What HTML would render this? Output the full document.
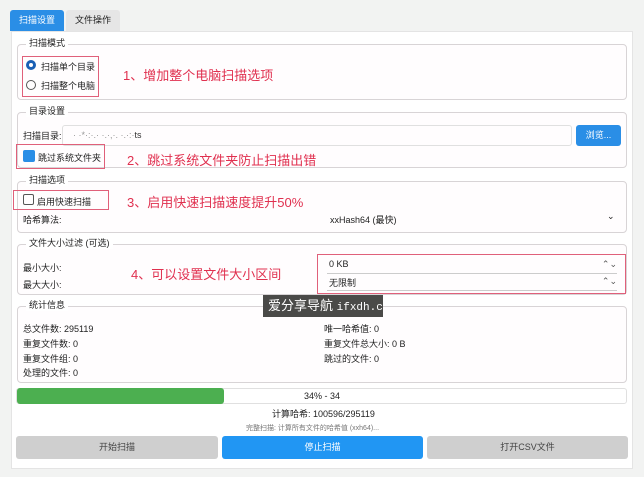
<!DOCTYPE html>
<html><head><meta charset="utf-8"><style>
*{box-sizing:border-box;margin:0;padding:0}
body{width:644px;height:477px;background:#f2f3f2;font-family:"Liberation Sans","Noto Sans CJK SC",sans-serif;font-size:9px;color:#222;position:relative;overflow:hidden}
.a{position:absolute}
.fs{position:absolute;left:17px;width:610px;border:1px solid #d8d4d6;border-radius:4px;background:#fffdfe}
.lg{position:absolute;top:-9px;left:8px;background:#fff;padding:0 3px;font-size:9px;color:#222}
.red{position:absolute;border:1px solid #e0607a}
.ann{position:absolute;color:#e0304f;font-size:13px}
.btn{position:absolute;top:436px;height:23px;border-radius:3px;text-align:center;line-height:23px;font-size:9px}
</style></head><body>
<div class="a" style="left:10px;top:10px;width:54px;height:21px;background:#2a8ee6;color:#fff;line-height:20px;text-align:center;border-radius:3px 3px 0 0">扫描设置</div>
<div class="a" style="left:66px;top:10px;width:54px;height:21px;background:#e6e6e6;line-height:20px;text-align:center;border-radius:3px 3px 0 0">文件操作</div>
<div class="a" style="left:11px;top:31px;width:622px;height:438px;background:#fff;border:1px solid #e4e4e4"></div>

<div class="fs" style="top:44px;height:56px"><span class="lg">扫描模式</span></div>
<div class="a" style="left:26px;top:60px;width:10px;height:10px;border:3px solid #1a5fb4;border-radius:50%"></div>
<div class="a" style="left:41px;top:60px">扫描单个目录</div>
<div class="a" style="left:26px;top:80px;width:10px;height:10px;border:1px solid #555;border-radius:50%"></div>
<div class="a" style="left:41px;top:79px">扫描整个电脑</div>
<div class="red" style="left:22px;top:56px;width:77px;height:41px"></div>
<div class="ann" style="left:123px;top:65px">1、增加整个电脑扫描选项</div>

<div class="fs" style="top:112px;height:56px"><span class="lg">目录设置</span></div>
<div class="a" style="left:23px;top:129px">扫描目录:</div>
<div class="a" style="left:62px;top:125px;width:510px;height:21px;border:1px solid #e0e0e0;border-radius:3px;padding:4px 10px;color:#999">· ·*·:·.· ·.·,·. ·.·:·<span style="color:#333">ts</span></div>
<div class="a" style="left:576px;top:125px;width:45px;height:21px;background:#2a8ee6;border-radius:3px;color:#fff;text-align:center;line-height:21px">浏览...</div>
<div class="a" style="left:23px;top:150px;width:12px;height:12px;background:#2a8ee6;border-radius:2px"></div>
<div class="a" style="left:38px;top:151px">跳过系统文件夹</div>
<div class="red" style="left:16px;top:144px;width:89px;height:25px"></div>
<div class="ann" style="left:127px;top:150px">2、跳过系统文件夹防止扫描出错</div>

<div class="fs" style="top:181px;height:52px"><span class="lg">扫描选项</span></div>
<div class="a" style="left:23px;top:194px;width:11px;height:11px;border:1px solid #555;border-radius:2px"></div>
<div class="a" style="left:37px;top:195px">启用快速扫描</div>
<div class="red" style="left:13px;top:190px;width:96px;height:20px"></div>
<div class="ann" style="left:127px;top:192px">3、启用快速扫描速度提升50%</div>
<div class="a" style="left:23px;top:213px">哈希算法:</div>
<div class="a" style="left:330px;top:213px">xxHash64 (最快)</div>
<div class="a" style="left:607px;top:211px">⌄</div>

<div class="fs" style="top:244px;height:51px"><span class="lg">文件大小过滤 (可选)</span></div>
<div class="a" style="left:23px;top:261px">最小大小:</div>
<div class="a" style="left:23px;top:278px">最大大小:</div>
<div class="ann" style="left:131px;top:264px">4、可以设置文件大小区间</div>
<div class="a" style="left:327px;top:259px;width:290px;height:15px;border-bottom:1px solid #ccc;padding-left:2px">0 KB<span style="float:right;color:#555">⌃⌄</span></div>
<div class="a" style="left:327px;top:276px;width:290px;height:15px;border-bottom:1px solid #ccc;padding-left:2px">无限制<span style="float:right;color:#555">⌃⌄</span></div>
<div class="red" style="left:317px;top:254px;width:309px;height:40px"></div>

<div class="fs" style="top:306px;height:77px"><span class="lg">统计信息</span></div>
<div class="a" style="left:23px;top:322px">总文件数: 295119</div>
<div class="a" style="left:23px;top:337px">重复文件数: 0</div>
<div class="a" style="left:23px;top:352px">重复文件组: 0</div>
<div class="a" style="left:23px;top:366px">处理的文件: 0</div>
<div class="a" style="left:324px;top:322px">唯一哈希值: 0</div>
<div class="a" style="left:324px;top:337px">重复文件总大小: 0 B</div>
<div class="a" style="left:324px;top:352px">跳过的文件: 0</div>
<div class="a" style="left:263px;top:295px;width:120px;height:22px;background:#4a4a48;color:#fff;font-size:13px;line-height:22px;padding-left:5px;white-space:nowrap;overflow:hidden">爱分享导航 <span style="font-family:'Liberation Mono',monospace;font-size:11px">ifxdh.co</span></div>

<div class="a" style="left:16px;top:388px;width:611px;height:16px;border:1px solid #e0e0e0;border-radius:3px;background:#fff"></div>
<div class="a" style="left:17px;top:388px;width:207px;height:16px;background:#4caf50;border-radius:3px"></div>
<div class="a" style="left:304px;top:391px">34% - 34</div>
<div class="a" style="left:272px;top:407px">计算哈希: 100596/295119</div>
<div class="a" style="left:246px;top:423px;font-size:7px;color:#777">完整扫描: 计算所有文件的哈希值 (xxh64)...</div>
<div class="btn" style="left:16px;width:202px;background:#cfcfcf;color:#444">开始扫描</div>
<div class="btn" style="left:222px;width:201px;background:#2196f3;color:#fff">停止扫描</div>
<div class="btn" style="left:427px;width:201px;background:#cfcfcf;color:#444">打开CSV文件</div>
</body></html>
